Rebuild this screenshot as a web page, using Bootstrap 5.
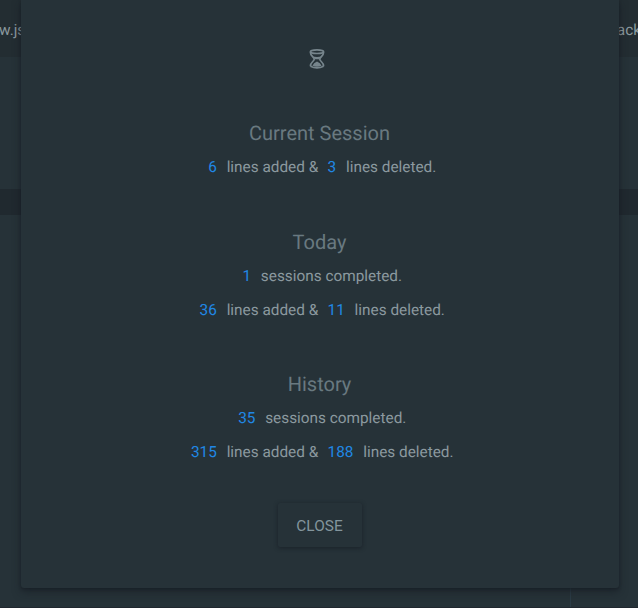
<!DOCTYPE html>
<html lang="en">
<head>
<meta charset="utf-8">
<meta name="viewport" content="width=device-width, initial-scale=1">
<title>Session summary</title>
<link rel="stylesheet" href="https://cdn.jsdelivr.net/npm/bootstrap@5.3.0/dist/css/bootstrap.min.css">
<style>
body{background:#263238;color:#8b999f;font-family:Roboto,sans-serif;font-size:15.4px;height:608px;text-rendering:geometricPrecision}
.tabs-strip{height:57px;background:#232d32;flex:none}
.tabs-strip span{line-height:60px;white-space:nowrap}
.tab-start{margin-left:-1px}
.tab-end{margin-right:-3px}
.editor-gap{height:132px;flex:none}
.active-line{height:26px;background:#20292f;flex:none}
.ruler{width:1px;margin-left:570px;background:#2b3c46}
.bottom-edge{height:1px;background:#20272f;flex:none}
.summary{top:0;left:20.5px;width:598px;height:588px;background:#263238;border-radius:0 0 3px 3px;box-shadow:0 4px 9px rgba(20,25,33,.55),0 1px 3px rgba(20,25,33,.5)}
.glass{margin:49px 5px 0 0;color:#76858c}
.stats h2{font-size:20px;line-height:24px;color:#697980;font-weight:400;margin:0 0 6px}
.stats p{line-height:33px;margin:0 0 1px;white-space:pre;font-size:15.35px}
.stats b{font-weight:400;color:#2088e5;margin:0 6px 0 5.5px}
.stats-first{margin-top:52px}
.stats-next{margin-top:45px}
.stats-last{margin-top:44px}
.btn-close-summary{width:84px;height:44px;margin-top:33px;padding:4px 0 0;border:0;border-radius:2px;background:#263238;color:#83959d;font-size:15.4px;box-shadow:0 1px 4px rgba(20,25,33,.65)}
</style>
</head>
<body class="d-flex flex-column overflow-hidden position-relative">
<div class="tabs-strip d-flex justify-content-between overflow-hidden">
  <span class="tab-start">w.json</span><span class="tab-end">ack</span>
</div>
<div class="editor-gap"></div>
<div class="active-line"></div>
<div class="flex-grow-1 d-flex"><div class="ruler"></div></div>
<div class="bottom-edge"></div>
<main class="summary position-absolute d-flex flex-column align-items-center text-center">
  <svg class="glass" width="16" height="20" viewBox="0 0 16 20" fill="none" stroke="currentColor" stroke-width="1.7" aria-hidden="true">
    <ellipse cx="8" cy="2.7" rx="6.6" ry="1.8"/>
    <path d="M1.4 3.2C1.4 7.5 5.2 8 5.2 10.2S1.4 13 1.4 17.2M14.6 3.2C14.6 7.5 10.8 8 10.8 10.2S14.6 13 14.6 17.2"/>
    <path d="M3 7.2Q8 8.6 13 7.2L10 10.2H6Z" fill="currentColor" stroke="none"/>
    <path d="M1.4 17.2Q8 20.4 14.6 17.2"/>
    <path d="M3.4 16.7Q4.6 14 8 12.6Q11.4 14 12.6 16.7Q8 18.6 3.4 16.7Z" fill="currentColor" stroke="none"/>
  </svg>
  <section class="stats stats-first"><h2>Current Session</h2>
    <p><b>6</b> lines added &amp; <b>3</b> lines deleted.</p></section>
  <section class="stats stats-next"><h2>Today</h2>
    <p><b>1</b> sessions completed.</p>
    <p><b>36</b> lines added &amp; <b>11</b> lines deleted.</p></section>
  <section class="stats stats-last"><h2>History</h2>
    <p><b>35</b> sessions completed.</p>
    <p><b>315</b> lines added &amp; <b>188</b> lines deleted.</p></section>
  <button type="button" class="btn btn-close-summary">CLOSE</button>
</main>
<script src="https://cdn.jsdelivr.net/npm/bootstrap@5.3.0/dist/js/bootstrap.bundle.min.js"></script>
</body>
</html>
